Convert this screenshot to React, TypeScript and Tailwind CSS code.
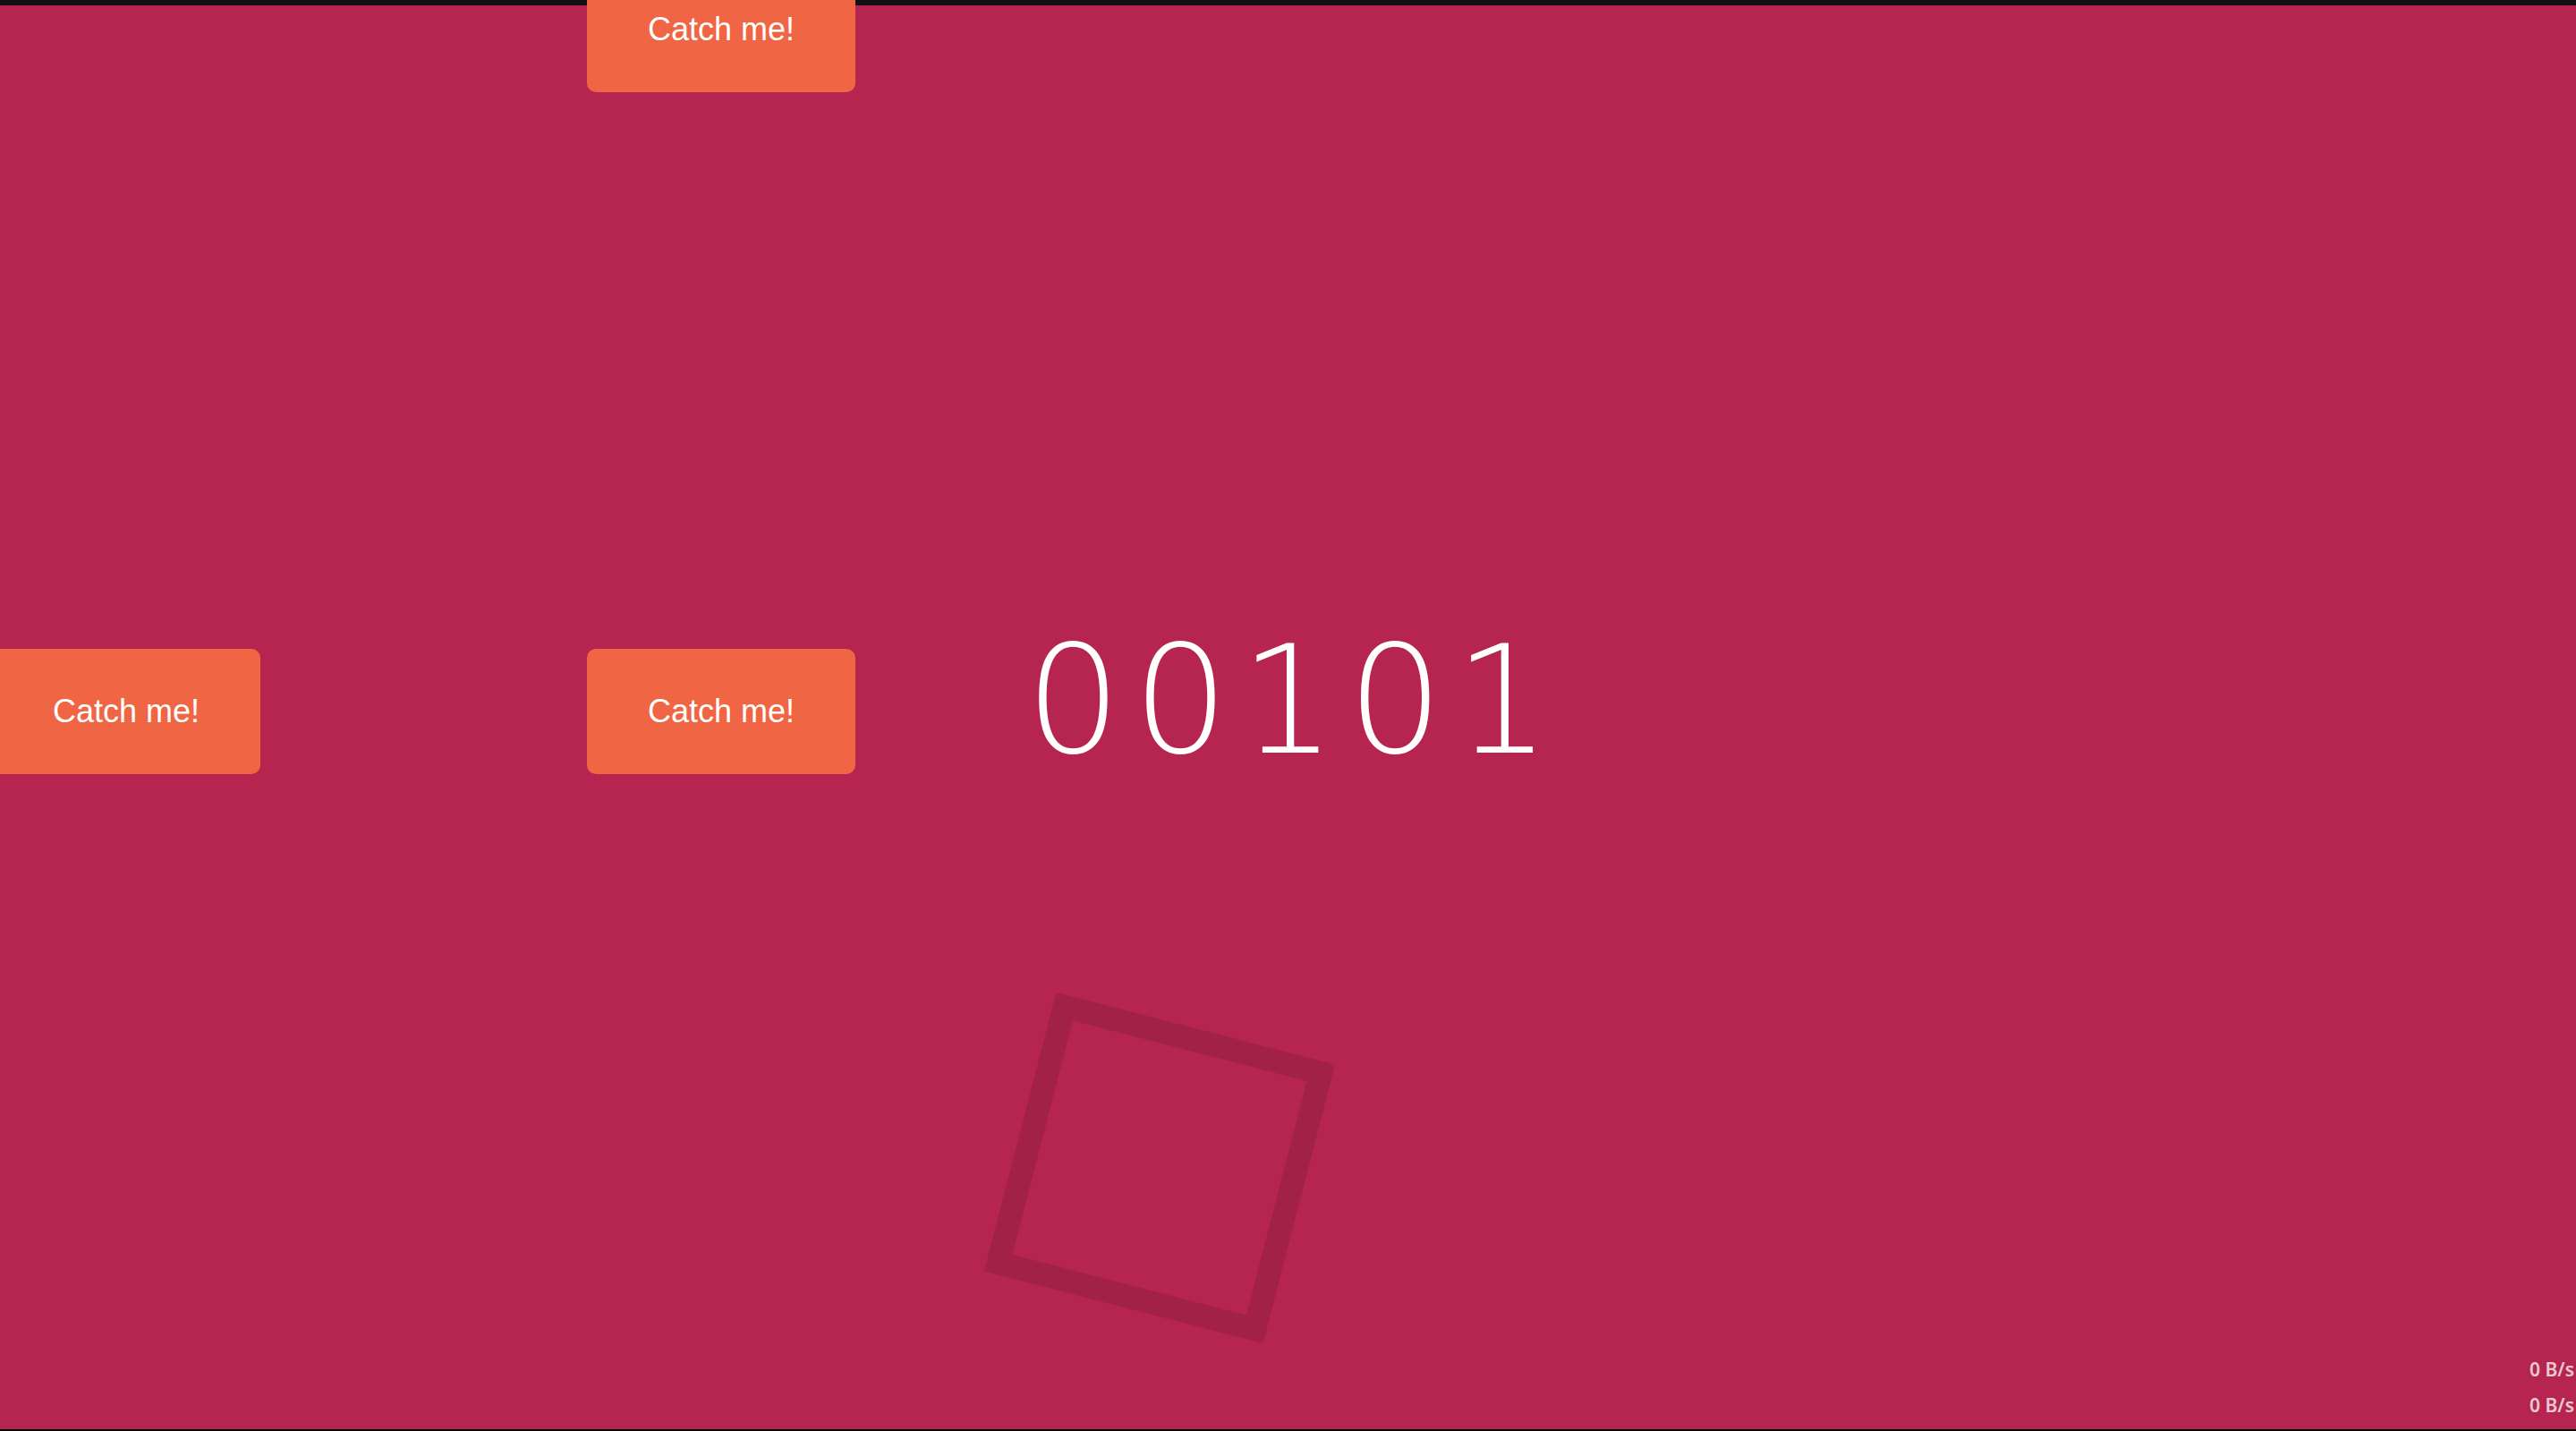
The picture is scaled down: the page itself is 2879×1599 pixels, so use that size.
const buttons = [
  { id: 'top', pos: 'left-[656px] -top-[37px]' },
  { id: 'left', pos: '-left-[9px] top-[725px]' },
  { id: 'mid', pos: 'left-[656px] top-[725px]' },
]

function CatchButton({ pos }: { pos: string }) {
  return (
    <button
      className={`absolute ${pos} z-20 flex h-[140px] w-[300px] items-center justify-center rounded-[10px] bg-[#f06543] font-['Liberation_Sans',Arial,sans-serif] text-[36px] text-white`}
    >
      Catch me!
    </button>
  )
}

export default function App() {
  const score = '00101'

  return (
    <div className="relative flex h-[1599px] w-full flex-col overflow-hidden bg-[#b5254f]">
      <div className="z-10 h-[6px] w-full bg-[#111111]" />

      <main className="flex flex-1 items-center justify-center pb-[38px]">
        <h1 className="pl-[13px] font-['DejaVu_Sans',sans-serif] text-[168px] font-extralight leading-none tracking-[13px] text-white">
          {score}
        </h1>
      </main>

      <div className="h-[2px] w-full bg-black" />

      <div className="absolute left-[1135px] top-[1144px] h-[322px] w-[322px] rotate-[14.5deg] border-[26px] border-black/10" />

      {buttons.map(b => (
        <CatchButton key={b.id} pos={b.pos} />
      ))}

      <div className="absolute bottom-[9px] right-[2px] z-30 text-right font-['Noto_Sans',sans-serif] text-[21px] font-semibold leading-[40px] text-white/75">
        <p>0 B/s</p>
        <p>0 B/s</p>
      </div>
    </div>
  )
}
